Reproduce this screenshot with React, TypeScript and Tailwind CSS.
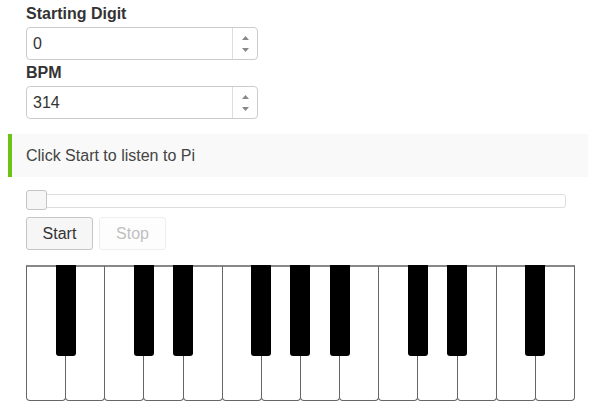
import React from "react";

const whiteKeys = ["A", "B", "C", "D", "E", "F", "G", "A", "B", "C", "D", "E", "F", "G"];
// a black key sits on the right edge of these white keys
const hasSharp = [true, false, true, true, false, true, true, true, false, true, true, false, true, false];

const NumberField = ({ value }: { value: string }) => (
  <div className="flex h-[33px] w-[232px] rounded-[4px] border border-[#cccccc] bg-white">
    <div className="flex flex-1 items-center pl-[6px] text-[16px] text-[#333333]">{value}</div>
    <div className="flex w-[25px] flex-col items-center justify-center gap-[8px] border-l border-[#dddddd]">
      <svg width="7" height="4" viewBox="0 0 7 4">
        <path d="M3.5 0L7 4H0z" fill="#888888" />
      </svg>
      <svg width="7" height="4" viewBox="0 0 7 4">
        <path d="M0 0H7L3.5 4z" fill="#888888" />
      </svg>
    </div>
  </div>
);

export default function App() {
  return (
    <div className="h-[410px] w-[600px] overflow-hidden bg-white font-['Liberation_Sans',Arial,sans-serif] text-[#333333]">
      <div className="pl-[26px] pt-[3px]">
        <div className="h-[22px] text-[16px] font-bold leading-[22px]">Starting Digit</div>
        <div className="mt-[2px]">
          <NumberField value="0" />
        </div>
        <div className="mt-[2px] h-[22px] text-[16px] font-bold leading-[22px]">BPM</div>
        <div className="mt-[2px]">
          <NumberField value="314" />
        </div>
      </div>

      <div className="ml-[8px] mt-[15px] flex h-[43px] w-[580px] items-center border-l-4 border-[#6cc417] bg-[#f9f9f9] pl-[14px] text-[16px] text-[#444444]">
        Click Start to listen to Pi
      </div>

      <div className="pl-[26px]">
        <div className="relative mt-[13px] h-[20px] w-[540px]">
          <div className="absolute left-0 right-0 top-[4px] h-[14px] rounded-[3px] border border-[#dddddd] bg-white" />
          <div className="absolute left-0 top-0 h-[20px] w-[21px] rounded-[3px] border border-[#c5c5c5] bg-[#f6f6f6]" />
        </div>

        <div className="mt-[7px] flex gap-[6px]">
          <div className="flex h-[33px] w-[67px] items-center justify-center rounded-[3px] border border-[#c5c5c5] bg-[#f6f6f6] text-[16px] text-[#333333]">
            Start
          </div>
          <div className="flex h-[33px] w-[67px] items-center justify-center rounded-[3px] border border-[#eeeeee] bg-[#fdfdfd] text-[16px] text-[#c0c0c0]">
            Stop
          </div>
        </div>

        <div className="mt-[15px] flex w-[549px] pl-px">
          {whiteKeys.map((k, i) => (
            <div
              key={i}
              className="relative -ml-px h-[136px] flex-1 rounded-b-[4px] border border-t-2 border-[#666666] border-t-[#888888] bg-white"
            >
              {hasSharp[i] && (
                <div className="absolute -right-[10.5px] -top-[2px] z-10 h-[91px] w-[20px] rounded-b-[3px] bg-black" />
              )}
            </div>
          ))}
        </div>
      </div>
    </div>
  );
}
